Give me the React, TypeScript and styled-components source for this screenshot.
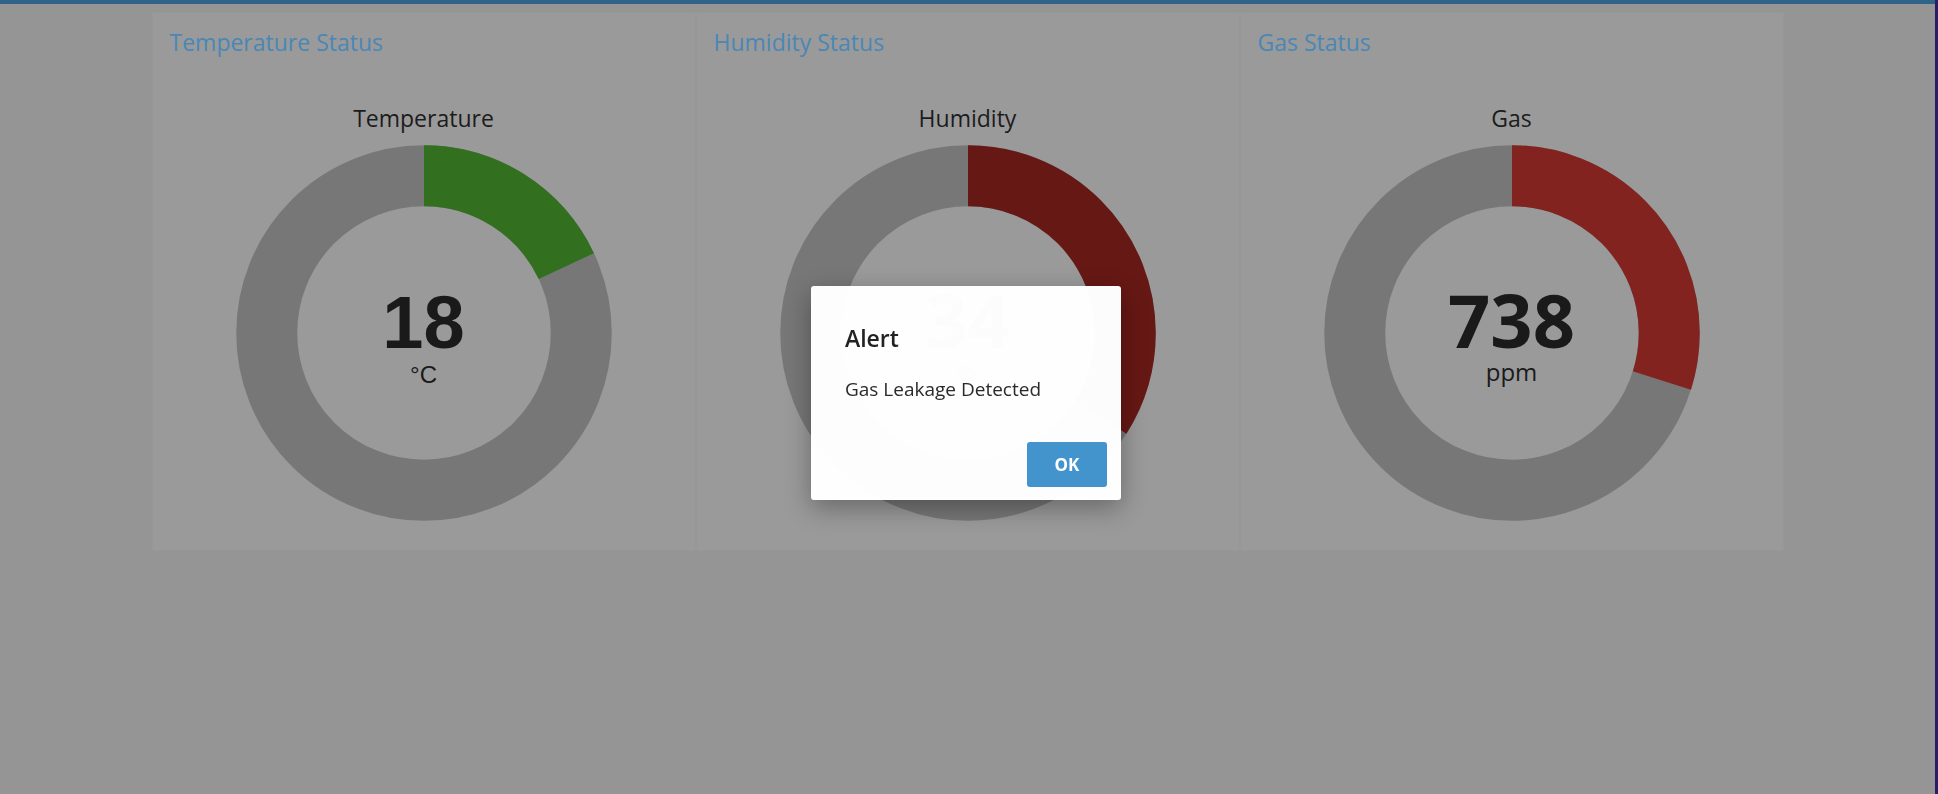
import React from "react";
import styled, { createGlobalStyle } from "styled-components";

const GlobalStyle = createGlobalStyle`
  html, body { margin: 0; padding: 0; }
  body {
    background: #959595;
    font-family: "Open Sans", "Noto Sans", sans-serif;
    overflow: hidden;
  }
`;

const Shell = styled.div`
  display: flex;
  min-height: 100vh;
`;

const Main = styled.div`
  flex: 1;
  display: flex;
  flex-direction: column;
`;

const TopBar = styled.div`
  height: 4px;
  background: #2f6488;
`;

const EdgeBar = styled.div`
  width: 3px;
  flex-shrink: 0;
  background: #2b1b63;
`;

const Content = styled.main`
  padding-top: 8px;
`;

const Grid = styled.div`
  width: 1632px;
  margin: 0 auto;
  display: grid;
  grid-template-columns: repeat(3, 1fr);
`;

const Card = styled.section`
  box-sizing: border-box;
  height: 539px;
  padding: 16px 17px 0;
  background: #9a9a9a;
  border: 1px solid #979797;
  display: flex;
  flex-direction: column;
`;

const CardTitle = styled.h3`
  margin: 0;
  font-size: 23px;
  line-height: 26px;
  font-weight: 400;
  color: #4a87b5;
`;

const ChartBlock = styled.div`
  margin-top: 50px;
  display: flex;
  flex-direction: column;
  align-items: center;
`;

const ChartLabel = styled.div`
  font-size: 23px;
  line-height: 26px;
  color: #1c1c1c;
  margin-bottom: 14px;
`;

const Donut = styled.div`
  position: relative;
  width: 376px;
  height: 376px;
`;

const CenterStack = styled.div<{ $top: number }>`
  position: absolute;
  left: 0;
  right: 0;
  top: ${(p) => p.$top}px;
  display: flex;
  flex-direction: column;
  align-items: center;
  color: #1a1a1a;
`;

const BigValue = styled.div<{ $font: string }>`
  font-family: ${(p) => p.$font};
  font-size: 74px;
  line-height: 1;
  font-weight: 700;
`;

const UnitText = styled.div<{ $font: string }>`
  font-family: ${(p) => p.$font};
  font-size: 24px;
  line-height: 1;
  margin-top: 3px;
`;

const Backdrop = styled.div`
  position: fixed;
  inset: 0;
  display: flex;
  align-items: center;
  justify-content: center;
`;

const Dialog = styled.div`
  box-sizing: border-box;
  width: 310px;
  height: 214px;
  margin-right: 6px;
  margin-top: -8px;
  padding: 39px 14px 13px 34px;
  background: rgba(255, 255, 255, 0.99);
  border-radius: 3px;
  box-shadow: 0 8px 26px rgba(0, 0, 0, 0.32);
  display: flex;
  flex-direction: column;
  color: #222;
`;

const DialogTitle = styled.div`
  font-size: 23px;
  line-height: 26px;
  font-weight: 600;
`;

const DialogMessage = styled.div`
  margin-top: 27px;
  font-size: 19px;
  line-height: 22px;
  color: #2a2a2a;
`;

const DialogFooter = styled.div`
  margin-top: auto;
  display: flex;
  justify-content: flex-end;
`;

const OkButton = styled.button`
  width: 80px;
  height: 45px;
  border: none;
  border-radius: 3px;
  background: #4394cc;
  color: #fff;
  font-family: "Open Sans", "Noto Sans", sans-serif;
  font-size: 17px;
  font-weight: 700;
`;

type Gauge = {
  title: string;
  label: string;
  value: number;
  max: number;
  unit: string;
  color: string;
  font: string;
  top: number;
};

const SANS = `"Open Sans", "Noto Sans", sans-serif`;
const ARIAL = `"Liberation Sans", Arial, sans-serif`;

const gauges: Gauge[] = [
  { title: "Temperature Status", label: "Temperature", value: 18, max: 100, unit: "°C", color: "#327020", font: ARIAL, top: 141 },
  { title: "Humidity Status", label: "Humidity", value: 34, max: 100, unit: "%", color: "#661814", font: SANS, top: 138 },
  { title: "Gas Status", label: "Gas", value: 738, max: 2470, unit: "ppm", color: "#82231f", font: SANS, top: 138 },
];

function Ring({ fraction, color }: { fraction: number; color: string }) {
  const r = 157.25;
  const c = 2 * Math.PI * r;
  return (
    <svg width="376" height="376" viewBox="0 0 376 376">
      <circle cx="188" cy="188" r={r} fill="none" stroke="#777777" strokeWidth="61" />
      <circle
        cx="188"
        cy="188"
        r={r}
        fill="none"
        stroke={color}
        strokeWidth="61"
        strokeDasharray={`${fraction * c} ${c}`}
        transform="rotate(-90 188 188)"
      />
    </svg>
  );
}

export default function App() {
  return (
    <>
      <GlobalStyle />
      <Shell>
        <Main>
          <TopBar />
          <Content>
            <Grid>
              {gauges.map((g) => (
                <Card key={g.title}>
                  <CardTitle>{g.title}</CardTitle>
                  <ChartBlock>
                    <ChartLabel>{g.label}</ChartLabel>
                    <Donut>
                      <Ring fraction={g.value / g.max} color={g.color} />
                      <CenterStack $top={g.top}>
                        <BigValue $font={g.font}>{g.value}</BigValue>
                        <UnitText $font={g.font}>{g.unit}</UnitText>
                      </CenterStack>
                    </Donut>
                  </ChartBlock>
                </Card>
              ))}
            </Grid>
          </Content>
        </Main>
        <EdgeBar />
      </Shell>
      <Backdrop>
        <Dialog role="alertdialog">
          <DialogTitle>Alert</DialogTitle>
          <DialogMessage>Gas Leakage Detected</DialogMessage>
          <DialogFooter>
            <OkButton>OK</OkButton>
          </DialogFooter>
        </Dialog>
      </Backdrop>
    </>
  );
}
